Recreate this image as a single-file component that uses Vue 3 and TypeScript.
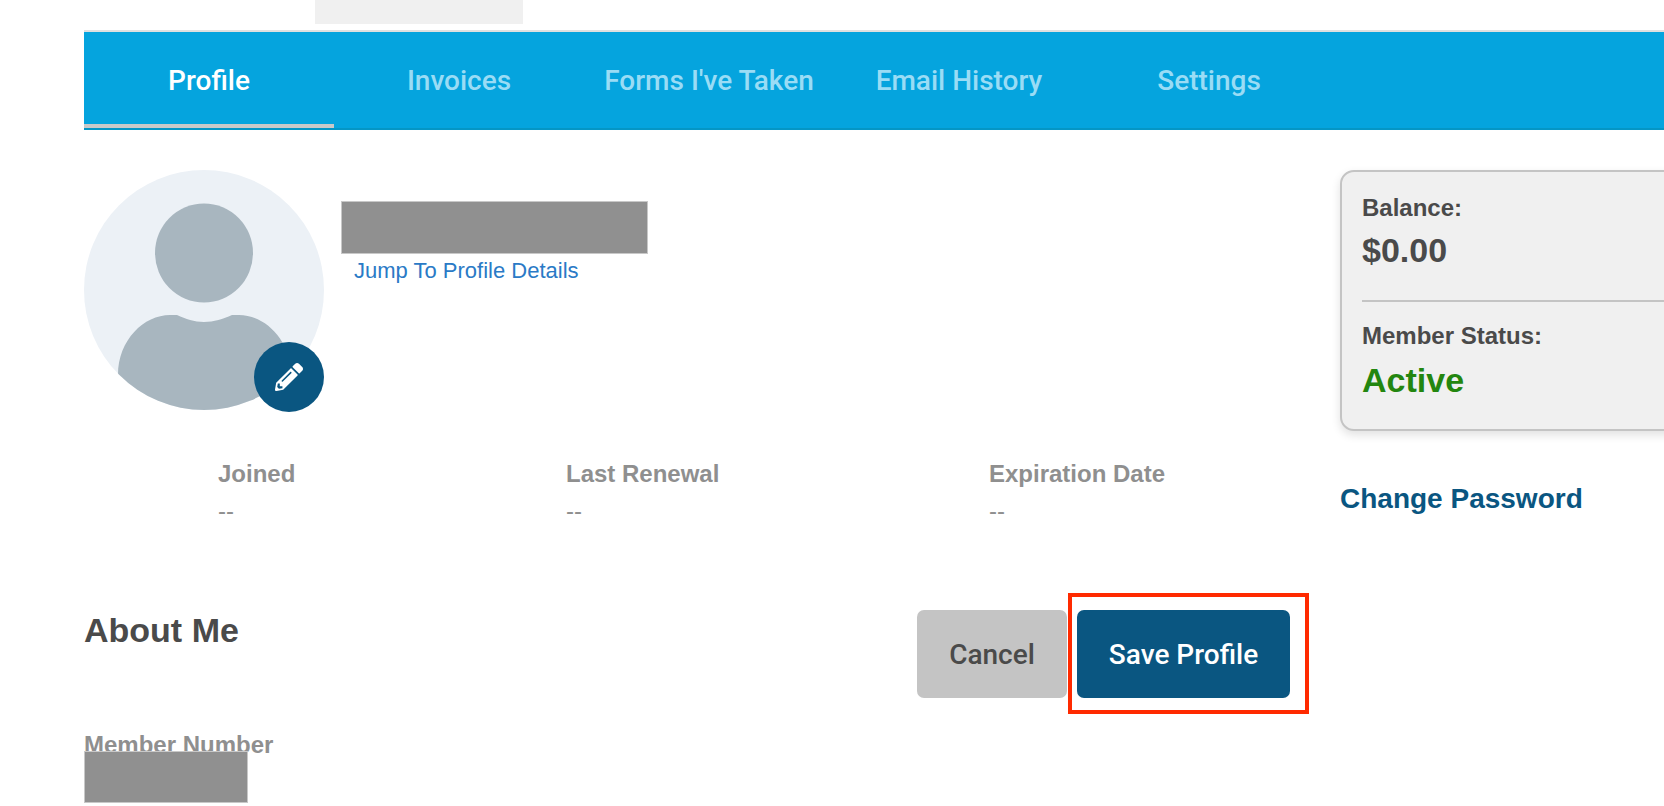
<script setup lang="ts">
const tabs: string[] = ['Profile', 'Invoices', "Forms I've Taken", 'Email History', 'Settings']
const dates = [
  { label: 'Joined', value: '--' },
  { label: 'Last Renewal', value: '--' },
  { label: 'Expiration Date', value: '--' },
]
</script>

<template>
  <div class="page">
    <div class="strip"></div>
    <nav class="tabs">
      <a v-for="(t, i) in tabs" :key="t" class="tab" :class="{ active: i === 0 }">{{ t }}</a>
    </nav>
    <div class="main">
      <div class="left">
        <div class="profile">
          <div class="avatar">
            <svg viewBox="0 0 240 240" width="240" height="240">
              <defs>
                <clipPath id="ac"><circle cx="120" cy="120" r="120" /></clipPath>
              </defs>
              <circle cx="120" cy="120" r="120" fill="#ecf1f6" />
              <g clip-path="url(#ac)" fill="#a8b6bf">
                <ellipse cx="120" cy="83" rx="49" ry="49.5" />
                <path d="M34 240V205C34 170 60 145 86 145L93 145C102 149 110 152 120 152C130 152 139 149 148 145L155 145C181 145 207 170 207 205V240Z" />
              </g>
            </svg>
            <button class="edit" aria-label="Edit picture">
              <svg viewBox="0 0 512 512" width="28" height="28">
                <path fill="#fff" d="M497.9 142.1l-46.1 46.1c-4.7 4.7-12.3 4.7-17 0l-111-111c-4.7-4.7-4.7-12.3 0-17l46.1-46.1c18.7-18.7 49.1-18.7 67.9 0l60.1 60.1c18.8 18.7 18.8 49.1 0 67.9zM284.2 99.8L21.6 362.4.4 483.9c-2.9 16.4 11.4 30.6 27.8 27.8l121.5-21.3 262.6-262.6c4.7-4.7 4.7-12.3 0-17l-111-111c-4.8-4.7-12.4-4.7-17.1 0zM124.1 339.9c-5.5-5.5-5.5-14.3 0-19.8l154-154c5.5-5.5 14.3-5.5 19.8 0s5.5 14.3 0 19.8l-154 154c-5.5 5.5-14.3 5.5-19.8 0zM88 424h48v36.3l-64.5 11.3-31.1-31.1L51.7 376H88v48z" />
              </svg>
            </button>
          </div>
          <div class="identity">
            <div class="redact name"></div>
            <a class="jump">Jump To Profile Details</a>
          </div>
        </div>
        <div class="dates">
          <div v-for="d in dates" :key="d.label" class="date">
            <div class="date-label">{{ d.label }}</div>
            <div class="date-value">{{ d.value }}</div>
          </div>
        </div>
        <div class="about">
          <h2>About Me</h2>
          <div class="actions">
            <button class="btn cancel">Cancel</button>
            <div class="save-wrap">
              <button class="btn save">Save Profile</button>
              <span class="highlight"></span>
            </div>
          </div>
        </div>
        <div class="member-label">Member Number</div>
        <div class="redact number"></div>
      </div>
      <aside class="right">
        <div class="card">
          <div class="card-label">Balance:</div>
          <div class="card-value">$0.00</div>
          <hr />
          <div class="card-label status">Member Status:</div>
          <div class="card-value green">Active</div>
        </div>
        <a class="password">Change Password</a>
      </aside>
    </div>
  </div>
</template>

<style>
html, body { margin: 0; background: #fff; overflow: hidden; }
</style>

<style scoped>
.page {
  width: 1664px;
  height: 806px;
  overflow: hidden;
  font-family: "Liberation Sans", Arial, sans-serif;
  color: #4a4a4a;
}
.strip {
  width: 208px;
  height: 24px;
  margin-left: 315px;
  background: #f0f0f0;
}
.tabs {
  display: flex;
  box-sizing: border-box;
  height: 100px;
  margin: 6px 0 0 84px;
  background: #05a4de;
  border-top: 2px solid #e0e0e0;
  border-bottom: 2px solid #0596c5;
}
.tab {
  box-sizing: border-box;
  width: 250px;
  height: 96px;
  line-height: 98px;
  text-align: center;
  font-family: Roboto, sans-serif;
  font-weight: 500;
  font-size: 28px;
  color: #9adcf5;
}
.tab.active {
  color: #fff;
  border-bottom: 4px solid #c9c9c9;
}
.main {
  display: flex;
  padding: 40px 0 0 84px;
  gap: 50px;
}
.left { width: 1206px; flex: none; }
.profile { display: flex; gap: 17px; }
.avatar {
  position: relative;
  width: 240px;
  height: 240px;
  flex: none;
}
.avatar > svg { display: block; }
.edit {
  position: absolute;
  left: 170px;
  top: 172px;
  width: 70px;
  height: 70px;
  padding: 0;
  border: 0;
  border-radius: 50%;
  background: #0a5681;
  display: flex;
  align-items: center;
  justify-content: center;
}
.identity { padding-top: 31px; }
.redact {
  box-sizing: border-box;
  background: #909090;
  border: 1px solid #c8c8c8;
}
.name { width: 307px; height: 53px; }
.jump {
  display: block;
  margin: 4px 0 0 13px;
  font-size: 22px;
  line-height: 26px;
  color: #2a7ac6;
}
.dates {
  display: grid;
  grid-template-columns: 348px 423px 1fr;
  padding-left: 134px;
  margin-top: 48px;
}
.date-label {
  font-size: 24px;
  font-weight: 700;
  line-height: 32px;
  color: #8f8f8f;
}
.date-value {
  margin-top: 5px;
  font-size: 24px;
  line-height: 32px;
  color: #8f8f8f;
}
.about {
  display: flex;
  justify-content: space-between;
  margin-top: 83px;
}
.about h2 {
  margin: 0;
  font-size: 34px;
  line-height: 40px;
  font-weight: 700;
  color: #4a4a4a;
}
.actions { display: flex; gap: 10px; }
.save-wrap { position: relative; }
.btn {
  display: block;
  height: 88px;
  padding: 0;
  border: 0;
  border-radius: 7px;
  font-family: Roboto, sans-serif;
  font-weight: 500;
  font-size: 28px;
}
.cancel { width: 150px; background: #c4c4c4; color: #4a4a4a; }
.save { width: 213px; background: #0a5681; color: #fff; }
.highlight {
  position: absolute;
  box-sizing: border-box;
  left: -9px;
  top: -17px;
  width: 241px;
  height: 121px;
  border: 4px solid #ff2a00;
}
.member-label {
  margin-top: 32px;
  font-size: 24px;
  font-weight: 700;
  line-height: 30px;
  color: #8f8f8f;
}
.number {
  width: 164px;
  height: 52px;
  margin-top: -9px;
  position: relative;
}
.right { flex: none; width: 400px; }
.card {
  box-sizing: border-box;
  height: 261px;
  padding: 22px 20px 0;
  background: #f0f0f0;
  border: 2px solid #c4c4c4;
  border-radius: 14px;
  box-shadow: 0 4px 10px rgba(0, 0, 0, 0.12);
}
.card-label {
  font-size: 24px;
  font-weight: 700;
  line-height: 28px;
  color: #4a4a4a;
}
.card-label.status { margin-top: -2px; }
.card-value {
  margin-top: 8px;
  font-size: 34px;
  font-weight: 700;
  line-height: 40px;
  color: #4a4a4a;
}
.card-value.green { margin-top: 10px; color: #23860f; }
.card hr {
  margin: 30px 0 22px;
  border: 0;
  border-top: 2px solid #c4c4c4;
}
.password {
  display: block;
  margin-top: 50px;
  font-size: 28px;
  font-weight: 700;
  line-height: 36px;
  color: #0a5681;
}
</style>
